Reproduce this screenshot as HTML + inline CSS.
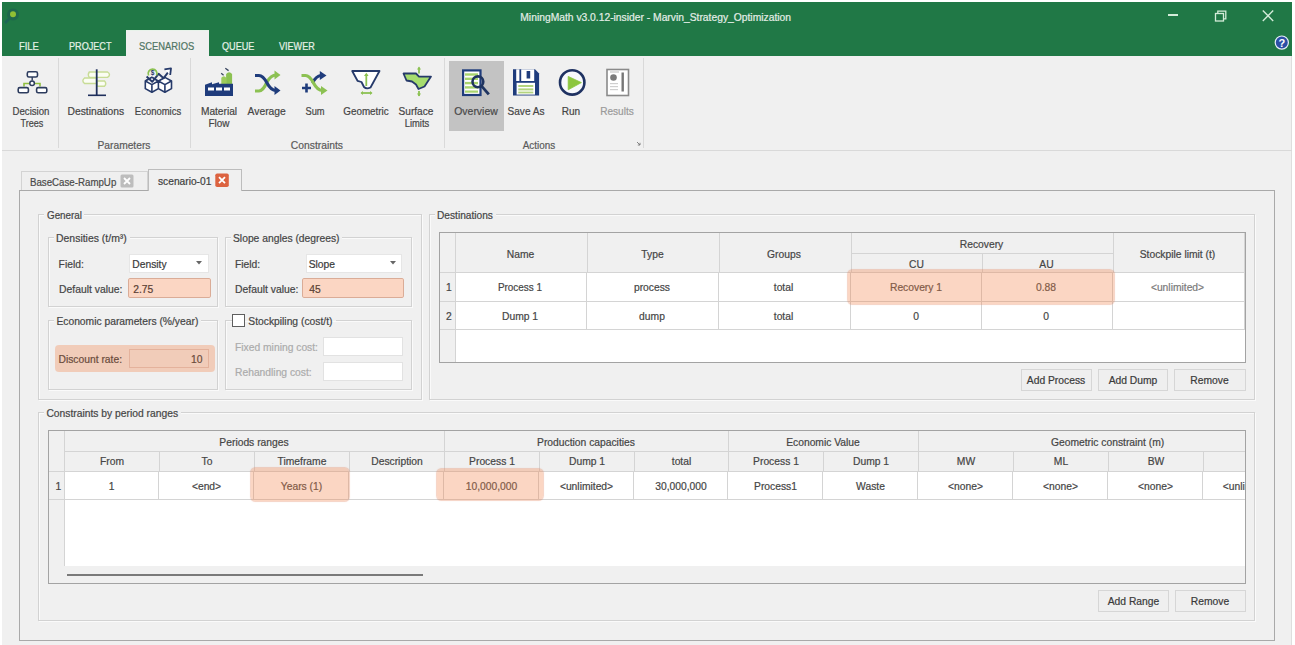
<!DOCTYPE html>
<html><head><meta charset="utf-8"><title>MiningMath</title>
<style>
html,body{margin:0;padding:0;}
body{width:1295px;height:645px;overflow:hidden;background:#fff;position:relative;font-family:"Liberation Sans",sans-serif;}
.r{position:absolute;box-sizing:border-box;}
.t{position:absolute;white-space:nowrap;line-height:1;font-family:"Liberation Sans",sans-serif;-webkit-text-stroke:0.2px currentColor;}
svg.r{overflow:visible;}
</style></head><body>
<div class="r" style="left:2px;top:2px;width:1290px;height:643px;background:#f0f0f0;border-right:1px solid #dedede;"></div>
<div class="r" style="left:2px;top:2px;width:1290px;height:54px;background:#207846;"></div>
<svg class="r" style="left:3px;top:6px;" width="18" height="18" viewBox="0 0 18 18"><circle cx="10" cy="8.5" r="6" fill="#1d5a52" opacity="0.55"/><path d="M6 13 L2 17" stroke="#1d5a60" stroke-width="2.5" opacity="0.6"/><circle cx="10" cy="8.3" r="3" fill="#8fbf34"/></svg>
<div class="t" style="top:13.00px;font-size:10.3px;color:#e4eee7;left:520.30px;transform-origin:0 0;">MiningMath v3.0.12-insider - Marvin_Strategy_Optimization</div>
<div class="r" style="left:1168px;top:14px;width:10px;height:1.5px;background:#d4ecd9;"></div>
<svg class="r" style="left:1213px;top:8px;" width="16" height="16" viewBox="0 0 16 16"><rect x="2.5" y="5.5" width="8" height="7.5" fill="none" stroke="#d4ecd9" stroke-width="1.3"/><path d="M4.8 5.5 V3.2 H12.8 V10.8 H10.5" fill="none" stroke="#d4ecd9" stroke-width="1.3"/></svg>
<svg class="r" style="left:1261px;top:9px;" width="14" height="14" viewBox="0 0 14 14"><path d="M1.8 1.6 L12.2 12 M12.2 1.6 L1.8 12" stroke="#d4ecd9" stroke-width="1.4"/></svg>
<svg class="r" style="left:1274px;top:35px;" width="16" height="16" viewBox="0 0 16 16"><circle cx="7.8" cy="7.6" r="6.6" fill="#2c4fa6" stroke="#e6eef8" stroke-width="1.2"/><text x="7.8" y="11.6" font-family="Liberation Sans" font-weight="bold" font-size="11" fill="#fff" text-anchor="middle">?</text></svg>
<div class="r" style="left:126px;top:30px;width:83px;height:26px;background:#f0f0f0;"></div>
<div class="r" style="left:126px;top:30px;width:83px;height:1px;background:#e8f3ea;"></div>
<div class="t" style="top:41.00px;font-size:10.5px;color:#e6f2e8;left:18.50px;transform-origin:0 0;transform:scaleX(0.8975);">FILE</div>
<div class="t" style="top:41.00px;font-size:10.5px;color:#e6f2e8;left:68.60px;transform-origin:0 0;transform:scaleX(0.8673);">PROJECT</div>
<div class="t" style="top:41.00px;font-size:10.5px;color:#4f7563;left:139.00px;transform-origin:0 0;transform:scaleX(0.8925);">SCENARIOS</div>
<div class="t" style="top:41.00px;font-size:10.5px;color:#e6f2e8;left:221.60px;transform-origin:0 0;transform:scaleX(0.8677);">QUEUE</div>
<div class="t" style="top:41.00px;font-size:10.5px;color:#e6f2e8;left:278.90px;transform-origin:0 0;transform:scaleX(0.8619);">VIEWER</div>
<div class="r" style="left:2px;top:150px;width:1290px;height:1px;background:#d9d9d9;"></div>
<div class="r" style="left:58px;top:58px;width:1px;height:90px;background:#d9d9d9;"></div>
<div class="r" style="left:190px;top:58px;width:1px;height:90px;background:#d9d9d9;"></div>
<div class="r" style="left:444px;top:58px;width:1px;height:90px;background:#d9d9d9;"></div>
<div class="r" style="left:643px;top:58px;width:1px;height:90px;background:#d9d9d9;"></div>
<div class="r" style="left:449px;top:61px;width:55px;height:70px;background:#c3c3c3;"></div>
<div class="t" style="top:107.00px;font-size:10.3px;color:#454545;left:-268.80px;width:600px;text-align:center;transform-origin:50% 0;transform:scaleX(0.9342);">Decision</div>
<div class="t" style="top:119.00px;font-size:10.3px;color:#454545;left:-268.30px;width:600px;text-align:center;transform-origin:50% 0;transform:scaleX(0.8788);">Trees</div>
<div class="t" style="top:107.00px;font-size:10.3px;color:#454545;left:-204.20px;width:600px;text-align:center;transform-origin:50% 0;">Destinations</div>
<div class="t" style="top:107.00px;font-size:10.3px;color:#454545;left:-142.50px;width:600px;text-align:center;transform-origin:50% 0;transform:scaleX(0.9192);">Economics</div>
<div class="t" style="top:141.00px;font-size:10.3px;color:#5a5a5a;left:-176.00px;width:600px;text-align:center;transform-origin:50% 0;transform:scaleX(0.9938);">Parameters</div>
<div class="t" style="top:107.00px;font-size:10.3px;color:#454545;left:-81.50px;width:600px;text-align:center;transform-origin:50% 0;transform:scaleX(0.9882);">Material</div>
<div class="t" style="top:119.00px;font-size:10.3px;color:#454545;left:-81.50px;width:600px;text-align:center;transform-origin:50% 0;transform:scaleX(0.9657);">Flow</div>
<div class="t" style="top:107.00px;font-size:10.3px;color:#454545;left:-33.30px;width:600px;text-align:center;transform-origin:50% 0;">Average</div>
<div class="t" style="top:107.00px;font-size:10.3px;color:#454545;left:14.50px;width:600px;text-align:center;transform-origin:50% 0;transform:scaleX(0.9019);">Sum</div>
<div class="t" style="top:107.00px;font-size:10.3px;color:#454545;left:65.70px;width:600px;text-align:center;transform-origin:50% 0;transform:scaleX(0.9557);">Geometric</div>
<div class="t" style="top:107.00px;font-size:10.3px;color:#454545;left:116.20px;width:600px;text-align:center;transform-origin:50% 0;transform:scaleX(0.9804);">Surface</div>
<div class="t" style="top:119.00px;font-size:10.3px;color:#454545;left:116.70px;width:600px;text-align:center;transform-origin:50% 0;transform:scaleX(0.9109);">Limits</div>
<div class="t" style="top:141.00px;font-size:10.3px;color:#5a5a5a;left:16.90px;width:600px;text-align:center;transform-origin:50% 0;">Constraints</div>
<div class="t" style="top:107.00px;font-size:10.3px;color:#4a4a4a;left:175.60px;width:600px;text-align:center;transform-origin:50% 0;transform:scaleX(1.0134);">Overview</div>
<div class="t" style="top:107.00px;font-size:10.3px;color:#454545;left:225.50px;width:600px;text-align:center;transform-origin:50% 0;transform:scaleX(0.9765);">Save As</div>
<div class="t" style="top:107.00px;font-size:10.3px;color:#454545;left:271.00px;width:600px;text-align:center;transform-origin:50% 0;transform:scaleX(0.9739);">Run</div>
<div class="t" style="top:107.00px;font-size:10.3px;color:#9a9a9a;left:316.50px;width:600px;text-align:center;transform-origin:50% 0;transform:scaleX(0.9783);">Results</div>
<div class="t" style="top:141.00px;font-size:10.3px;color:#5a5a5a;left:239.00px;width:600px;text-align:center;transform-origin:50% 0;transform:scaleX(0.9622);">Actions</div>
<svg class="r" style="left:636px;top:141px;" width="5" height="5" viewBox="0 0 5 5"><path d="M1 1 L4 4 M4 1.8 V4 H1.8" stroke="#777" stroke-width="0.9" fill="none"/></svg>
<svg class="r" style="left:14px;top:66px;" width="36" height="32" viewBox="0 0 36 32">
<path d="M10 20.5 V17.5 H15.5 M19.5 17.5 H26 V20.5" fill="none" stroke="#8fbf3f" stroke-width="1.6"/>
<rect x="13.3" y="5.8" width="10.2" height="5.2" rx="1.6" fill="#fff" stroke="#2d3c5e" stroke-width="1.6"/>
<path d="M18.2 11 V14.5" stroke="#2d3c5e" stroke-width="1.4"/>
<circle cx="18.1" cy="17.3" r="2.3" fill="#fff" stroke="#2d3c5e" stroke-width="1.5"/>
<rect x="4.2" y="21.6" width="10.2" height="5.2" rx="1.6" fill="#fff" stroke="#2d3c5e" stroke-width="1.6"/>
<rect x="22.6" y="21.6" width="10.2" height="5.2" rx="1.6" fill="#fff" stroke="#2d3c5e" stroke-width="1.6"/>
</svg>
<svg class="r" style="left:80px;top:66px;" width="36" height="32" viewBox="0 0 36 32">
<path d="M9.3 6 H27.5 Q31.5 8.7 27.5 11.4 H9.3 Q7.3 8.7 9.3 6 Z" fill="#fbfdf3" stroke="#c8dc96" stroke-width="1.4"/>
<path d="M16.5 12 H4.5 Q1.2 14.8 4.5 17.5 H16.5 Z" fill="#fbfdf3" stroke="#c8dc96" stroke-width="1.4"/>
<path d="M17 15 H24.5 Q27 17.7 24.5 20.3 H17 Z" fill="#fbfdf3" stroke="#c8dc96" stroke-width="1.4"/>
<path d="M16.7 3.3 V29.3" stroke="#1f2f5c" stroke-width="1.8"/>
<path d="M8 29.3 H26" stroke="#1f2f5c" stroke-width="1.6"/>
</svg>
<svg class="r" style="left:143px;top:64px;" width="32" height="34" viewBox="0 0 32 34">
<g fill="#fff" stroke="#263a6a" stroke-width="1.6" stroke-linejoin="round">
<path d="M8.9 13.4 L15.4 17 L21.9 13.4 L28.5 17 L28.5 24.6 L21.9 28.2 L15.4 24.6 L8.9 28.2 L2.3 24.6 L2.3 17 Z"/>
<path d="M2.3 17 L8.9 20.6 L15.4 17 L21.9 20.6 L28.5 17 M8.9 20.6 V28.2 M21.9 20.6 V28.2 M15.4 17 V24.6"/>
<path d="M2.3 17 L8.9 13.4 L15.4 17 L21.9 13.4"/>
</g>
<path d="M3.6 12.5 L9.2 17.8 L15.6 9.8 L20.6 14.2 L26.6 6.4" fill="none" stroke="#263a6a" stroke-width="1.9" stroke-linejoin="round"/>
<path d="M21.4 5.3 L28 4.3 L27.2 11" fill="#fff" stroke="#263a6a" stroke-width="1.8" stroke-linejoin="round"/>
<path d="M5.6 11.5 A4.4 4.4 0 1 1 13.6 11.3" fill="none" stroke="#8cc152" stroke-width="1.7"/>
<text x="9.6" y="11.3" font-family="Liberation Sans" font-weight="bold" font-size="6.5" fill="#263a6a" text-anchor="middle">$</text>
</svg>
<svg class="r" style="left:203px;top:64px;" width="34" height="34" viewBox="0 0 34 34">
<path d="M18.3 20.5 V13.8 Q20.8 10.6 23.3 13.8 V20.5 Z" fill="#9ccb5a"/>
<path d="M23.1 20.5 V10 Q26.1 6.6 29.1 10 V20.5 Z" fill="#8cc152"/>
<path d="M18.2 9.3 L20.6 11.2 M22.3 4.3 L25.6 6.6" stroke="#3a4660" stroke-width="1.3"/>
<path d="M2 32.1 V20.8 L9 18.2 V20.2 L16 18.2 V19.8 H30 V32.1 Z" fill="#1f3c7c"/>
<rect x="5" y="23.5" width="6" height="3" fill="#fff"/>
<rect x="13" y="23.5" width="6" height="3" fill="#fff"/>
<rect x="21" y="23.5" width="6" height="3" fill="#fff"/>
</svg>
<svg class="r" style="left:252px;top:66px;" width="32" height="30" viewBox="0 0 32 30">
<path d="M3 25 H7 Q11 25 15 16 Q19 9 24 9" fill="none" stroke="#8cc152" stroke-width="3.2"/>
<path d="M22.5 4.5 L28.5 9 L22.5 13.5 Z" fill="#8cc152"/>
<path d="M3 9.5 H7 Q11 9.5 15 17 Q19 24.5 24 24.5" fill="none" stroke="#1f3c7c" stroke-width="3.2"/>
<path d="M22.5 20 L28.5 24.5 L22.5 29 Z" fill="#1f3c7c"/>
</svg>
<svg class="r" style="left:298px;top:66px;" width="34" height="30" viewBox="0 0 34 30">
<path d="M14.5 17 Q18 10 23 9.5" fill="none" stroke="#1f3c7c" stroke-width="3.2"/>
<path d="M21.8 5 L28.5 9.5 L21.8 14 Z" fill="#1f3c7c"/>
<path d="M3.5 9.5 H7.5 Q11.5 9.5 15.5 17 Q19.5 24.5 24.5 24.5" fill="none" stroke="#8cc152" stroke-width="3.2"/>
<path d="M23 20 L29.5 24.5 L23 29 Z" fill="#8cc152"/>
<path d="M8.5 17.5 V26.5 M4 22 H13" stroke="#1f3c7c" stroke-width="2.6"/>
</svg>
<svg class="r" style="left:348px;top:64px;" width="36" height="34" viewBox="0 0 36 34">
<path d="M4.2 7 H31.5 L22.5 23.5 Q18.5 25.5 16 23 L13.5 18 L9.5 16.8 Z" fill="#fff" stroke="#263a6a" stroke-width="1.8" stroke-linejoin="round"/>
<path d="M18.3 10 V22" stroke="#8cc152" stroke-width="1.8"/>
<path d="M16 12 L18.3 8.8 L20.6 12 Z" fill="#8cc152"/>
<path d="M13.3 29 H23.5" stroke="#8cc152" stroke-width="1.8"/>
<path d="M15 27 L12.5 29 L15 31 Z M22 27 L24.5 29 L22 31 Z" fill="#8cc152"/>
</svg>
<svg class="r" style="left:400px;top:64px;" width="36" height="34" viewBox="0 0 36 34">
<path d="M3.5 9.5 H16 L19 12.6 H31 L24.5 22.5 L18.5 25 L16 20.5 L12 17.5 L6.5 16.5 Z" fill="#a6dd6e" stroke="#263a6a" stroke-width="1.8" stroke-linejoin="round"/>
<path d="M19 3.5 V9.5" stroke="#8cc152" stroke-width="1.8"/>
<path d="M17 5.5 L19 2.5 L21 5.5 Z" fill="#8cc152"/>
<path d="M19 27 V32" stroke="#8cc152" stroke-width="1.8"/>
<path d="M17 29.5 L19 32.5 L21 29.5 Z" fill="#8cc152"/>
</svg>
<svg class="r" style="left:459px;top:66px;" width="34" height="32" viewBox="0 0 34 32">
<rect x="4.1" y="4.4" width="17.4" height="24.6" fill="#fff" stroke="#1f3c7c" stroke-width="2.2"/>
<g fill="#a9d46e"><rect x="6" y="7.3" width="13" height="2.4"/><rect x="6" y="11.6" width="13" height="2.4"/><rect x="6" y="15.9" width="13" height="2.4"/><rect x="6" y="20.2" width="13" height="2.4"/><rect x="6" y="24.5" width="13" height="2.2"/></g>
<circle cx="18.9" cy="15.8" r="5.4" fill="none" stroke="#1f3460" stroke-width="2.6"/>
<path d="M22.6 20.2 L29.8 28.4" stroke="#1f3460" stroke-width="2.8"/>
</svg>
<svg class="r" style="left:510px;top:66px;" width="32" height="32" viewBox="0 0 32 32">
<path d="M3 3.3 H25 L29.1 7.6 V29.6 H3 Z" fill="#1f3c7c"/>
<rect x="6.2" y="3.3" width="18" height="11.7" fill="#fff"/>
<rect x="9.4" y="3.3" width="1.8" height="11.7" fill="#1f3c7c"/>
<rect x="16.6" y="5" width="3.6" height="7.5" fill="#1f3c7c"/>
<rect x="6.6" y="16.8" width="18.4" height="11.8" fill="#fff"/>
<g fill="#b3d47e"><rect x="8.3" y="19" width="15" height="2"/><rect x="8.3" y="22.4" width="15" height="2"/><rect x="8.3" y="25.6" width="15" height="1.8"/></g>
</svg>
<svg class="r" style="left:556px;top:66px;" width="33" height="33" viewBox="0 0 33 33">
<circle cx="16.2" cy="16.4" r="12.2" fill="#f7f9fc" stroke="#1f3262" stroke-width="2.6"/>
<path d="M12.2 10.4 L25.4 16.6 L12.2 23.8 Z" fill="#8cc63f" stroke="#8cc63f" stroke-width="0.8" stroke-linejoin="round"/>
</svg>
<svg class="r" style="left:603px;top:66px;" width="30" height="32" viewBox="0 0 30 32">
<rect x="4" y="3.5" width="21.5" height="26" fill="#fff" stroke="#8a8a8a" stroke-width="1.6"/>
<circle cx="10.5" cy="11.5" r="3.3" fill="#7a7a7a"/>
<rect x="18.5" y="6.5" width="2.4" height="19" fill="#777"/>
<g fill="#cfcfcf"><rect x="7" y="17" width="8" height="1.2"/><rect x="7" y="20" width="8" height="1.2"/><rect x="7" y="23" width="8" height="1.2"/></g>
<rect x="7" y="5.5" width="9" height="1" fill="#bbb"/>
</svg>
<div class="r" style="left:19px;top:190px;width:1256px;height:451px;background:#f0f0f0;border:1px solid #a9a9a9;"></div>
<div class="r" style="left:21px;top:171px;width:127px;height:19px;background:#efefef;border:1px solid #d3d3d3;border-bottom:none;"></div>
<div class="r" style="left:148px;top:169px;width:94px;height:22px;background:#f0f0f0;border:1px solid #bdbdbd;border-bottom:none;"></div>
<div class="t" style="top:178.00px;font-size:10.3px;color:#4a4a4a;left:29.70px;transform-origin:0 0;transform:scaleX(0.9422);">BaseCase-RampUp</div>
<div class="t" style="top:177.00px;font-size:10.3px;color:#3f3f3f;left:158.00px;transform-origin:0 0;transform:scaleX(0.9923);">scenario-01</div>
<svg class="r" style="left:120px;top:174px;" width="14" height="14" viewBox="0 0 14 14"><rect x="0.5" y="0.5" width="13" height="13" rx="1.5" fill="#bdbdbd"/><path d="M4 4 L10 10 M10 4 L4 10" stroke="#fff" stroke-width="1.8"/></svg>
<svg class="r" style="left:215px;top:173px;" width="14" height="14" viewBox="0 0 14 14"><rect x="0.3" y="0.5" width="13.5" height="13.5" rx="1.8" fill="#dc6340"/><path d="M4 4.2 L10 10.2 M10 4.2 L4 10.2" stroke="#fff" stroke-width="1.8"/></svg>
<div class="r" style="left:39px;top:215px;width:384px;height:186px;background:transparent;border:1px solid #fafafa;"></div>
<div class="r" style="left:38px;top:214px;width:384px;height:186px;background:transparent;border:1px solid #d2d2d2;"></div>
<div class="r" style="left:44px;top:212px;width:40px;height:5px;background:#f0f0f0;"></div>
<div class="t" style="top:211.00px;font-size:10.3px;color:#454545;left:46.50px;transform-origin:0 0;transform:scaleX(0.9552);">General</div>
<div class="r" style="left:49px;top:238px;width:170px;height:70px;background:transparent;border:1px solid #fafafa;"></div>
<div class="r" style="left:48px;top:237px;width:170px;height:70px;background:transparent;border:1px solid #d2d2d2;"></div>
<div class="r" style="left:54px;top:235px;width:76px;height:5px;background:#f0f0f0;"></div>
<div class="t" style="top:234.00px;font-size:10.3px;color:#454545;left:56.40px;transform-origin:0 0;transform:scaleX(1.0141);">Densities (t/m³)</div>
<div class="t" style="top:260.00px;font-size:10.3px;color:#454545;left:58.60px;transform-origin:0 0;">Field:</div>
<div class="r" style="left:129px;top:254px;width:80px;height:19px;background:#fff;border:1px solid #e6e6e6;"></div>
<div class="t" style="top:260.00px;font-size:10.3px;color:#3a3a3a;left:132.30px;transform-origin:0 0;">Density</div>
<svg class="r" style="left:196px;top:261px;" width="6" height="4" viewBox="0 0 6 4"><path d="M0 0 H6 L3 3.5 Z" fill="#666"/></svg>
<div class="t" style="top:285.00px;font-size:10.3px;color:#454545;left:58.60px;transform-origin:0 0;transform:scaleX(1.0067);">Default value:</div>
<div class="r" style="left:128px;top:278px;width:83px;height:20px;background:#fff;"></div>
<div class="r" style="left:128px;top:278px;width:83px;height:20px;background:rgba(242,135,80,0.34);border:1px solid rgba(170,110,85,0.40);border-radius:2px;"></div>
<div class="t" style="top:285.00px;font-size:10.3px;color:#5a4034;left:133.20px;transform-origin:0 0;">2.75</div>
<div class="r" style="left:226px;top:238px;width:187px;height:70px;background:transparent;border:1px solid #fafafa;"></div>
<div class="r" style="left:225px;top:237px;width:187px;height:70px;background:transparent;border:1px solid #d2d2d2;"></div>
<div class="r" style="left:231px;top:235px;width:111px;height:5px;background:#f0f0f0;"></div>
<div class="t" style="top:234.00px;font-size:10.3px;color:#454545;left:233.00px;transform-origin:0 0;">Slope angles (degrees)</div>
<div class="t" style="top:260.00px;font-size:10.3px;color:#454545;left:235.00px;transform-origin:0 0;">Field:</div>
<div class="r" style="left:306px;top:254px;width:96px;height:19px;background:#fff;border:1px solid #e6e6e6;"></div>
<div class="t" style="top:260.00px;font-size:10.3px;color:#3a3a3a;left:308.70px;transform-origin:0 0;">Slope</div>
<svg class="r" style="left:390px;top:261px;" width="6" height="4" viewBox="0 0 6 4"><path d="M0 0 H6 L3 3.5 Z" fill="#666"/></svg>
<div class="t" style="top:285.00px;font-size:10.3px;color:#454545;left:235.00px;transform-origin:0 0;transform:scaleX(1.0067);">Default value:</div>
<div class="r" style="left:302px;top:278px;width:102px;height:20px;background:#fff;"></div>
<div class="r" style="left:302px;top:278px;width:102px;height:20px;background:rgba(242,135,80,0.34);border:1px solid rgba(170,110,85,0.40);border-radius:2px;"></div>
<div class="t" style="top:285.00px;font-size:10.3px;color:#5a4034;left:309.20px;transform-origin:0 0;">45</div>
<div class="r" style="left:49px;top:321px;width:170px;height:70px;background:transparent;border:1px solid #fafafa;"></div>
<div class="r" style="left:48px;top:320px;width:170px;height:70px;background:transparent;border:1px solid #d2d2d2;"></div>
<div class="r" style="left:54px;top:318px;width:147px;height:5px;background:#f0f0f0;"></div>
<div class="t" style="top:317.00px;font-size:10.3px;color:#454545;left:56.40px;transform-origin:0 0;">Economic parameters (%/year)</div>
<div class="r" style="left:55px;top:345px;width:160px;height:27px;background:rgba(242,135,80,0.34);border-radius:4px;"></div>
<div class="r" style="left:129px;top:349px;width:80px;height:19px;background:transparent;border:1px solid rgba(200,120,90,0.30);"></div>
<div class="t" style="top:355.00px;font-size:10.3px;color:#6a4b3c;left:58.50px;transform-origin:0 0;">Discount rate:</div>
<div class="t" style="top:355.00px;font-size:10.3px;color:#6a4b3c;left:-397.50px;width:600px;text-align:right;transform-origin:100% 0;">10</div>
<div class="r" style="left:226px;top:321px;width:187px;height:70px;background:transparent;border:1px solid #fafafa;"></div>
<div class="r" style="left:225px;top:320px;width:187px;height:70px;background:transparent;border:1px solid #d2d2d2;"></div>
<div class="r" style="left:244px;top:316px;width:92px;height:5px;background:#f0f0f0;"></div>
<div class="r" style="left:232px;top:314px;width:13px;height:13px;background:#fff;border:1px solid #5e5e5e;"></div>
<div class="t" style="top:317.00px;font-size:10.3px;color:#454545;left:248.30px;transform-origin:0 0;">Stockpiling (cost/t)</div>
<div class="t" style="top:343.00px;font-size:10.3px;color:#ababab;left:235.00px;transform-origin:0 0;">Fixed mining cost:</div>
<div class="t" style="top:368.00px;font-size:10.3px;color:#ababab;left:235.00px;transform-origin:0 0;">Rehandling cost:</div>
<div class="r" style="left:323px;top:337px;width:80px;height:19px;background:#fff;border:1px solid #e2e2e2;"></div>
<div class="r" style="left:323px;top:362px;width:80px;height:19px;background:#fff;border:1px solid #e2e2e2;"></div>
<div class="r" style="left:430px;top:215px;width:826px;height:186px;background:transparent;border:1px solid #fafafa;"></div>
<div class="r" style="left:429px;top:214px;width:826px;height:186px;background:transparent;border:1px solid #d2d2d2;"></div>
<div class="r" style="left:435px;top:212px;width:61px;height:5px;background:#f0f0f0;"></div>
<div class="t" style="top:211.00px;font-size:10.3px;color:#454545;left:436.70px;transform-origin:0 0;transform:scaleX(0.9863);">Destinations</div>
<div class="r" style="left:439px;top:232px;width:807px;height:131px;background:#fff;border:1px solid #a3a3a3;"></div>
<div class="r" style="left:440px;top:233px;width:15px;height:129px;background:#f0f0f0;"></div>
<div class="r" style="left:455px;top:233px;width:790px;height:40px;background:#f0f0f0;"></div>
<div class="r" style="left:455px;top:233px;width:1px;height:129px;background:#d4d4d4;"></div>
<div class="r" style="left:587px;top:233px;width:1px;height:40px;background:#d4d4d4;"></div>
<div class="r" style="left:586px;top:273px;width:1px;height:57px;background:#d4d4d4;"></div>
<div class="r" style="left:719px;top:233px;width:1px;height:40px;background:#d4d4d4;"></div>
<div class="r" style="left:718px;top:273px;width:1px;height:57px;background:#d4d4d4;"></div>
<div class="r" style="left:851px;top:233px;width:1px;height:40px;background:#d4d4d4;"></div>
<div class="r" style="left:850px;top:273px;width:1px;height:57px;background:#d4d4d4;"></div>
<div class="r" style="left:1113px;top:233px;width:1px;height:40px;background:#d4d4d4;"></div>
<div class="r" style="left:1112px;top:273px;width:1px;height:57px;background:#d4d4d4;"></div>
<div class="r" style="left:1244px;top:233px;width:1px;height:97px;background:#d4d4d4;"></div>
<div class="r" style="left:982px;top:253px;width:1px;height:20px;background:#d4d4d4;"></div>
<div class="r" style="left:981px;top:273px;width:1px;height:57px;background:#d4d4d4;"></div>
<div class="r" style="left:851px;top:253px;width:262px;height:1px;background:#d4d4d4;"></div>
<div class="r" style="left:440px;top:272px;width:805px;height:1px;background:#d4d4d4;"></div>
<div class="r" style="left:440px;top:301px;width:805px;height:1px;background:#d4d4d4;"></div>
<div class="r" style="left:440px;top:329px;width:805px;height:1px;background:#d4d4d4;"></div>
<div class="t" style="top:250.00px;font-size:10.3px;color:#454545;left:220.50px;width:600px;text-align:center;transform-origin:50% 0;">Name</div>
<div class="t" style="top:250.00px;font-size:10.3px;color:#454545;left:352.50px;width:600px;text-align:center;transform-origin:50% 0;">Type</div>
<div class="t" style="top:250.00px;font-size:10.3px;color:#454545;left:484.00px;width:600px;text-align:center;transform-origin:50% 0;">Groups</div>
<div class="t" style="top:240.00px;font-size:10.3px;color:#454545;left:681.50px;width:600px;text-align:center;transform-origin:50% 0;">Recovery</div>
<div class="t" style="top:260.00px;font-size:10.3px;color:#454545;left:616.50px;width:600px;text-align:center;transform-origin:50% 0;">CU</div>
<div class="t" style="top:260.00px;font-size:10.3px;color:#454545;left:746.50px;width:600px;text-align:center;transform-origin:50% 0;">AU</div>
<div class="t" style="top:250.00px;font-size:10.3px;color:#454545;left:877.50px;width:600px;text-align:center;transform-origin:50% 0;">Stockpile limit (t)</div>
<div class="t" style="top:283.00px;font-size:10.3px;color:#454545;left:446.00px;transform-origin:0 0;">1</div>
<div class="t" style="top:312.00px;font-size:10.3px;color:#454545;left:446.00px;transform-origin:0 0;">2</div>
<div class="t" style="top:283.00px;font-size:10.3px;color:#454545;left:220.00px;width:600px;text-align:center;transform-origin:50% 0;transform:scaleX(0.9652);">Process 1</div>
<div class="t" style="top:283.00px;font-size:10.3px;color:#454545;left:352.00px;width:600px;text-align:center;transform-origin:50% 0;">process</div>
<div class="t" style="top:283.00px;font-size:10.3px;color:#454545;left:483.50px;width:600px;text-align:center;transform-origin:50% 0;">total</div>
<div class="t" style="top:283.00px;font-size:10.3px;color:#454545;left:616.00px;width:600px;text-align:center;transform-origin:50% 0;">Recovery 1</div>
<div class="t" style="top:283.00px;font-size:10.3px;color:#454545;left:746.00px;width:600px;text-align:center;transform-origin:50% 0;">0.88</div>
<div class="t" style="top:283.00px;font-size:10.3px;color:#7a7a7a;left:877.50px;width:600px;text-align:center;transform-origin:50% 0;">&lt;unlimited&gt;</div>
<div class="t" style="top:312.00px;font-size:10.3px;color:#454545;left:220.00px;width:600px;text-align:center;transform-origin:50% 0;">Dump 1</div>
<div class="t" style="top:312.00px;font-size:10.3px;color:#454545;left:352.00px;width:600px;text-align:center;transform-origin:50% 0;">dump</div>
<div class="t" style="top:312.00px;font-size:10.3px;color:#454545;left:483.50px;width:600px;text-align:center;transform-origin:50% 0;">total</div>
<div class="t" style="top:312.00px;font-size:10.3px;color:#454545;left:616.00px;width:600px;text-align:center;transform-origin:50% 0;">0</div>
<div class="t" style="top:312.00px;font-size:10.3px;color:#454545;left:746.00px;width:600px;text-align:center;transform-origin:50% 0;">0</div>
<div class="r" style="left:848px;top:270px;width:266px;height:34px;background:rgba(242,135,80,0.34);border-radius:5px;box-shadow:0 0 0.8px 0.4px rgba(225,130,90,0.35);"></div>
<div class="r" style="left:1021px;top:369px;width:71px;height:22px;background:#efefef;border:1px solid #d6d6d6;"></div>
<div class="t" style="top:376.00px;font-size:10.3px;color:#3a3a3a;left:756.00px;width:600px;text-align:center;transform-origin:50% 0;">Add Process</div>
<div class="r" style="left:1098px;top:369px;width:70px;height:22px;background:#efefef;border:1px solid #d6d6d6;"></div>
<div class="t" style="top:376.00px;font-size:10.3px;color:#3a3a3a;left:833.00px;width:600px;text-align:center;transform-origin:50% 0;">Add Dump</div>
<div class="r" style="left:1174px;top:369px;width:72px;height:22px;background:#efefef;border:1px solid #d6d6d6;"></div>
<div class="t" style="top:376.00px;font-size:10.3px;color:#3a3a3a;left:909.50px;width:600px;text-align:center;transform-origin:50% 0;">Remove</div>
<div class="r" style="left:39px;top:413px;width:1217px;height:209px;background:transparent;border:1px solid #fafafa;"></div>
<div class="r" style="left:38px;top:412px;width:1217px;height:209px;background:transparent;border:1px solid #d2d2d2;"></div>
<div class="r" style="left:44px;top:410px;width:137px;height:5px;background:#f0f0f0;"></div>
<div class="t" style="top:409.00px;font-size:10.3px;color:#454545;left:46.40px;transform-origin:0 0;">Constraints by period ranges</div>
<div class="r" style="left:48px;top:430px;width:1198px;height:154px;background:#f0f0f0;border:1px solid #a3a3a3;"></div>
<div class="r" style="left:64px;top:471px;width:1181px;height:95px;background:#fff;"></div>
<div class="r" style="left:64px;top:431px;width:1px;height:135px;background:#d4d4d4;"></div>
<div class="r" style="left:159px;top:451px;width:1px;height:20px;background:#d4d4d4;"></div>
<div class="r" style="left:158px;top:471px;width:1px;height:29px;background:#d4d4d4;"></div>
<div class="r" style="left:254px;top:451px;width:1px;height:20px;background:#d4d4d4;"></div>
<div class="r" style="left:253px;top:471px;width:1px;height:29px;background:#d4d4d4;"></div>
<div class="r" style="left:349px;top:451px;width:1px;height:20px;background:#d4d4d4;"></div>
<div class="r" style="left:348px;top:471px;width:1px;height:29px;background:#d4d4d4;"></div>
<div class="r" style="left:444px;top:431px;width:1px;height:40px;background:#d4d4d4;"></div>
<div class="r" style="left:443px;top:471px;width:1px;height:29px;background:#d4d4d4;"></div>
<div class="r" style="left:539px;top:451px;width:1px;height:20px;background:#d4d4d4;"></div>
<div class="r" style="left:538px;top:471px;width:1px;height:29px;background:#d4d4d4;"></div>
<div class="r" style="left:634px;top:451px;width:1px;height:20px;background:#d4d4d4;"></div>
<div class="r" style="left:633px;top:471px;width:1px;height:29px;background:#d4d4d4;"></div>
<div class="r" style="left:728px;top:431px;width:1px;height:40px;background:#d4d4d4;"></div>
<div class="r" style="left:727px;top:471px;width:1px;height:29px;background:#d4d4d4;"></div>
<div class="r" style="left:823px;top:451px;width:1px;height:20px;background:#d4d4d4;"></div>
<div class="r" style="left:822px;top:471px;width:1px;height:29px;background:#d4d4d4;"></div>
<div class="r" style="left:918px;top:431px;width:1px;height:40px;background:#d4d4d4;"></div>
<div class="r" style="left:917px;top:471px;width:1px;height:29px;background:#d4d4d4;"></div>
<div class="r" style="left:1013px;top:451px;width:1px;height:20px;background:#d4d4d4;"></div>
<div class="r" style="left:1012px;top:471px;width:1px;height:29px;background:#d4d4d4;"></div>
<div class="r" style="left:1108px;top:451px;width:1px;height:20px;background:#d4d4d4;"></div>
<div class="r" style="left:1107px;top:471px;width:1px;height:29px;background:#d4d4d4;"></div>
<div class="r" style="left:1203px;top:451px;width:1px;height:20px;background:#d4d4d4;"></div>
<div class="r" style="left:1202px;top:471px;width:1px;height:29px;background:#d4d4d4;"></div>
<div class="r" style="left:65px;top:451px;width:1180px;height:1px;background:#d4d4d4;"></div>
<div class="r" style="left:49px;top:471px;width:1196px;height:1px;background:#d4d4d4;"></div>
<div class="r" style="left:49px;top:499px;width:1196px;height:1px;background:#d4d4d4;"></div>
<div class="t" style="top:438.00px;font-size:10.3px;color:#454545;left:-46.00px;width:600px;text-align:center;transform-origin:50% 0;">Periods ranges</div>
<div class="t" style="top:438.00px;font-size:10.3px;color:#454545;left:286.00px;width:600px;text-align:center;transform-origin:50% 0;">Production capacities</div>
<div class="t" style="top:438.00px;font-size:10.3px;color:#454545;left:523.00px;width:600px;text-align:center;transform-origin:50% 0;">Economic Value</div>
<div class="t" style="top:438.00px;font-size:10.3px;color:#454545;left:807.60px;width:600px;text-align:center;transform-origin:50% 0;">Geometric constraint (m)</div>
<div class="t" style="top:457.00px;font-size:10.3px;color:#454545;left:-188.00px;width:600px;text-align:center;transform-origin:50% 0;">From</div>
<div class="t" style="top:482.00px;font-size:10.3px;color:#454545;left:-188.50px;width:600px;text-align:center;transform-origin:50% 0;">1</div>
<div class="t" style="top:457.00px;font-size:10.3px;color:#454545;left:-93.00px;width:600px;text-align:center;transform-origin:50% 0;">To</div>
<div class="t" style="top:482.00px;font-size:10.3px;color:#454545;left:-93.50px;width:600px;text-align:center;transform-origin:50% 0;">&lt;end&gt;</div>
<div class="t" style="top:457.00px;font-size:10.3px;color:#454545;left:2.00px;width:600px;text-align:center;transform-origin:50% 0;">Timeframe</div>
<div class="t" style="top:482.00px;font-size:10.3px;color:#454545;left:1.50px;width:600px;text-align:center;transform-origin:50% 0;">Years (1)</div>
<div class="t" style="top:457.00px;font-size:10.3px;color:#454545;left:97.00px;width:600px;text-align:center;transform-origin:50% 0;">Description</div>
<div class="t" style="top:457.00px;font-size:10.3px;color:#454545;left:192.00px;width:600px;text-align:center;transform-origin:50% 0;">Process 1</div>
<div class="t" style="top:482.00px;font-size:10.3px;color:#454545;left:191.50px;width:600px;text-align:center;transform-origin:50% 0;">10,000,000</div>
<div class="t" style="top:457.00px;font-size:10.3px;color:#454545;left:287.00px;width:600px;text-align:center;transform-origin:50% 0;">Dump 1</div>
<div class="t" style="top:482.00px;font-size:10.3px;color:#454545;left:286.50px;width:600px;text-align:center;transform-origin:50% 0;">&lt;unlimited&gt;</div>
<div class="t" style="top:457.00px;font-size:10.3px;color:#454545;left:381.50px;width:600px;text-align:center;transform-origin:50% 0;">total</div>
<div class="t" style="top:482.00px;font-size:10.3px;color:#454545;left:381.00px;width:600px;text-align:center;transform-origin:50% 0;">30,000,000</div>
<div class="t" style="top:457.00px;font-size:10.3px;color:#454545;left:476.00px;width:600px;text-align:center;transform-origin:50% 0;">Process 1</div>
<div class="t" style="top:482.00px;font-size:10.3px;color:#454545;left:475.50px;width:600px;text-align:center;transform-origin:50% 0;">Process1</div>
<div class="t" style="top:457.00px;font-size:10.3px;color:#454545;left:571.00px;width:600px;text-align:center;transform-origin:50% 0;">Dump 1</div>
<div class="t" style="top:482.00px;font-size:10.3px;color:#454545;left:570.50px;width:600px;text-align:center;transform-origin:50% 0;">Waste</div>
<div class="t" style="top:457.00px;font-size:10.3px;color:#454545;left:666.00px;width:600px;text-align:center;transform-origin:50% 0;">MW</div>
<div class="t" style="top:482.00px;font-size:10.3px;color:#454545;left:665.50px;width:600px;text-align:center;transform-origin:50% 0;">&lt;none&gt;</div>
<div class="t" style="top:457.00px;font-size:10.3px;color:#454545;left:761.00px;width:600px;text-align:center;transform-origin:50% 0;">ML</div>
<div class="t" style="top:482.00px;font-size:10.3px;color:#454545;left:760.50px;width:600px;text-align:center;transform-origin:50% 0;">&lt;none&gt;</div>
<div class="t" style="top:457.00px;font-size:10.3px;color:#454545;left:856.00px;width:600px;text-align:center;transform-origin:50% 0;">BW</div>
<div class="t" style="top:482.00px;font-size:10.3px;color:#454545;left:855.50px;width:600px;text-align:center;transform-origin:50% 0;">&lt;none&gt;</div>
<div class="t" style="top:482.00px;font-size:10.3px;color:#454545;left:55.50px;transform-origin:0 0;">1</div>
<div class="r" style="left:1203px;top:472px;width:42px;height:27px;overflow:hidden;"><div class="t" style="left:19.8px;top:10.00px;font-size:10.3px;color:#454545;">&lt;unlimited&gt;</div></div>
<div class="r" style="left:67px;top:574px;width:356px;height:2px;background:#7a7a7a;"></div>
<div class="r" style="left:251px;top:468px;width:98px;height:33px;background:rgba(242,135,80,0.34);border-radius:5px;box-shadow:0 0 0.8px 0.4px rgba(225,130,90,0.35);"></div>
<div class="r" style="left:437px;top:469px;width:106px;height:31px;background:rgba(242,135,80,0.34);border-radius:5px;box-shadow:0 0 0.8px 0.4px rgba(225,130,90,0.35);"></div>
<div class="r" style="left:1098px;top:590px;width:71px;height:22px;background:#efefef;border:1px solid #d6d6d6;"></div>
<div class="t" style="top:597.00px;font-size:10.3px;color:#3a3a3a;left:833.50px;width:600px;text-align:center;transform-origin:50% 0;">Add Range</div>
<div class="r" style="left:1175px;top:590px;width:71px;height:22px;background:#efefef;border:1px solid #d6d6d6;"></div>
<div class="t" style="top:597.00px;font-size:10.3px;color:#3a3a3a;left:910.00px;width:600px;text-align:center;transform-origin:50% 0;">Remove</div>
</body></html>
